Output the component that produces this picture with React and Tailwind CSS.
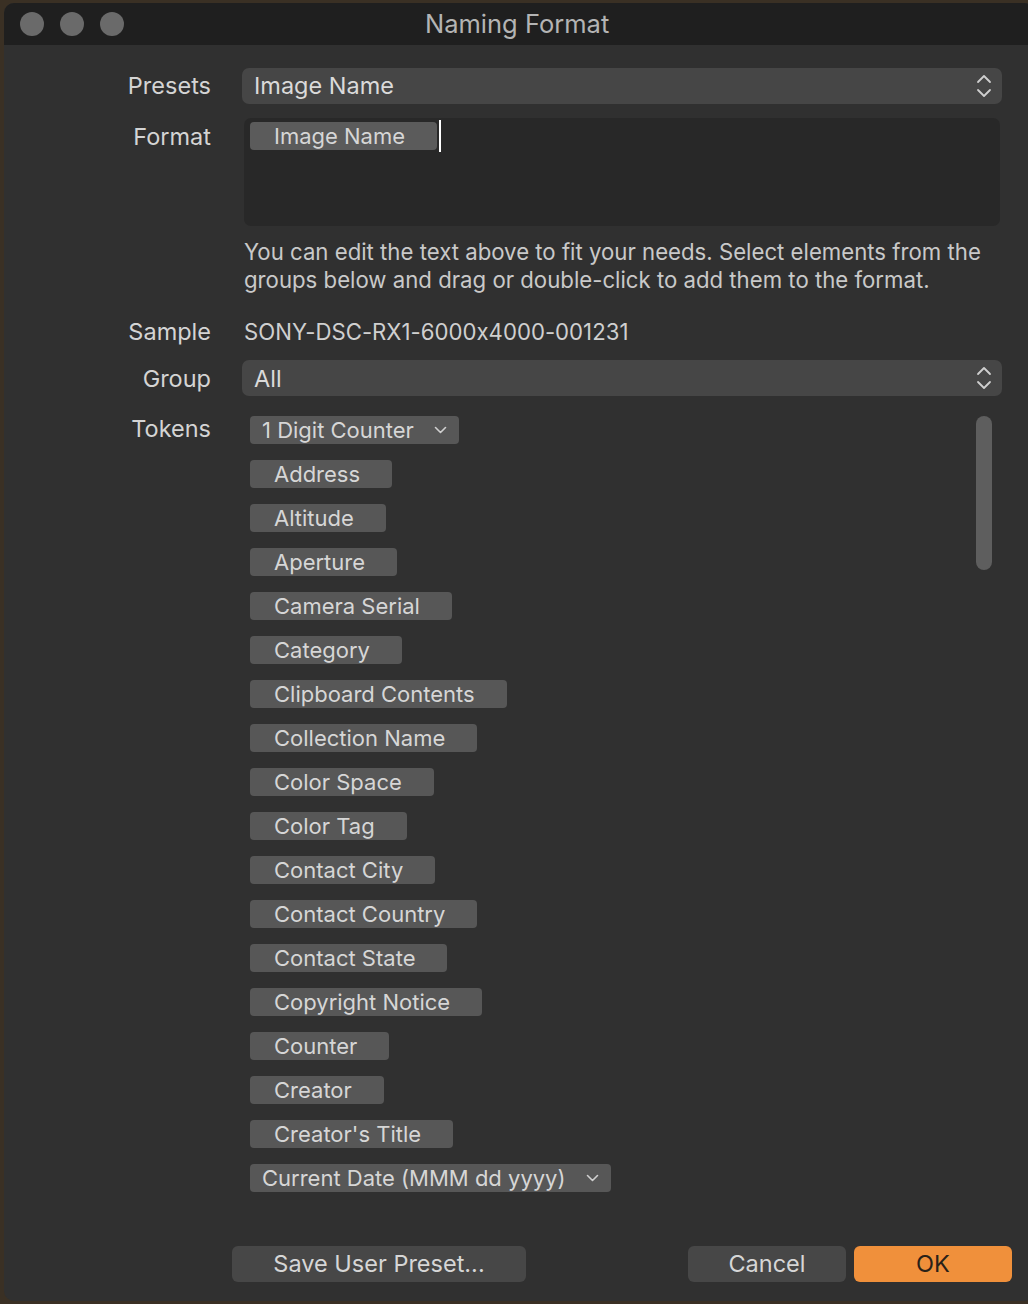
import React from "react";

const tokens = [
  { t: "1 Digit Counter", dd: true },
  { t: "Address" },
  { t: "Altitude" },
  { t: "Aperture" },
  { t: "Camera Serial" },
  { t: "Category" },
  { t: "Clipboard Contents" },
  { t: "Collection Name" },
  { t: "Color Space" },
  { t: "Color Tag" },
  { t: "Contact City" },
  { t: "Contact Country" },
  { t: "Contact State" },
  { t: "Copyright Notice" },
  { t: "Counter" },
  { t: "Creator" },
  { t: "Creator's Title" },
  { t: "Current Date (MMM dd yyyy)", dd: true },
];

function UpDown() {
  return (
    <svg width="16" height="26" viewBox="0 0 16 26" fill="none" stroke="#cfcfcf" strokeWidth="1.8" strokeLinecap="round" strokeLinejoin="round">
      <path d="M2 9 L8 3 L14 9" />
      <path d="M2 17 L8 23 L14 17" />
    </svg>
  );
}

function Chevron() {
  return (
    <svg width="13" height="8" viewBox="0 0 13 8" fill="none" stroke="#d0d0d0" strokeWidth="1.6" strokeLinecap="round" strokeLinejoin="round">
      <path d="M1.5 1.5 L6.5 6.5 L11.5 1.5" />
    </svg>
  );
}

function Select({ value }) {
  return (
    <div className="h-[36px] w-[760px] rounded-[7px] bg-[#464646] flex items-center justify-between pl-[12px] pr-[10px] text-[23.5px] text-[#dadada]">
      <span>{value}</span>
      <UpDown />
    </div>
  );
}

const label = "w-[207px] text-right text-[23.5px] text-[#d4d4d4]";

export default function App() {
  return (
    <div className="w-[1028px] h-[1304px] bg-[#3a3024] overflow-hidden relative font-['Inter','Liberation_Sans',sans-serif] [font-feature-settings:'calt'_0]">
      <div className="ml-[4px] mt-[3px] w-[1030px] h-[1298px] rounded-[10px] bg-[#303030] overflow-hidden flex flex-col">
        {/* title bar */}
        <div className="h-[42px] bg-[#1f1f1f] relative flex items-center shrink-0">
          <div className="flex gap-[16px] pl-[16px]">
            <div className="w-[24px] h-[24px] rounded-full bg-[#6a6a6a]" />
            <div className="w-[24px] h-[24px] rounded-full bg-[#6a6a6a]" />
            <div className="w-[24px] h-[24px] rounded-full bg-[#6a6a6a]" />
          </div>
          <div className="absolute left-[421px] top-0 h-[42px] flex items-center text-[25.5px] text-[#b4b4b4]">Naming Format</div>
        </div>

        {/* body */}
        <div className="flex flex-col pt-[23px]">
          {/* Presets */}
          <div className="flex items-center">
            <div className={label}>Presets</div>
            <div className="ml-[31px]"><Select value="Image Name" /></div>
          </div>

          {/* Format */}
          <div className="flex mt-[14px]">
            <div className={label + " pt-[1px]"}>Format</div>
            <div className="ml-[33px] w-[756px] h-[108px] rounded-[7px] bg-[#282828] pl-[6px] pt-[4px]">
              <div className="flex items-start">
                <div className="h-[28px] w-[187px] rounded-[4px] bg-[#5b5b5b] pl-[24px] flex items-center text-[22px] text-[#d6d6d6]">Image Name</div>
                <div className="ml-[2px] -mt-[2px] w-[2px] h-[32px] bg-white" />
              </div>
            </div>
          </div>

          {/* help */}
          <div className="flex mt-[12px]">
            <div className="w-[207px]" />
            <div className="ml-[33px] w-[760px] text-[22.2px] leading-[28px] text-[#c9c9c9]">
              You can edit the text above to fit your needs. Select elements from the groups below and drag or double-click to add them to the format.
            </div>
          </div>

          {/* Sample */}
          <div className="flex items-center mt-[20px]">
            <div className={label}>Sample</div>
            <div className="ml-[33px] text-[22.2px] text-[#cfcfcf]">SONY-DSC-RX1-6000x4000-001231</div>
          </div>

          {/* Group */}
          <div className="flex items-center mt-[11px]">
            <div className={label}>Group</div>
            <div className="ml-[31px]"><Select value="All" /></div>
          </div>

          {/* Tokens */}
          <div className="flex mt-[20px]">
            <div className={label + " -mt-[5px]"}>Tokens</div>
            <div className="ml-[39px] w-[746px] h-[800px] relative">
              <div className="flex flex-col items-start gap-[16px]">
                {tokens.map((k) =>
                  k.dd ? (
                    <div key={k.t} className="h-[28px] rounded-[4px] bg-[#575757] pl-[12px] pr-[12px] flex items-center gap-[20px] text-[22px] text-[#d6d6d6]">
                      <span>{k.t}</span>
                      <Chevron />
                    </div>
                  ) : (
                    <div key={k.t} className="h-[28px] rounded-[4px] bg-[#575757] pl-[24px] pr-[32px] flex items-center text-[22px] text-[#d6d6d6]">
                      {k.t}
                    </div>
                  )
                )}
              </div>
              <div className="absolute left-[726px] top-0 w-[16px] h-[154px] rounded-full bg-[#5e5e5e]" />
            </div>
          </div>
        </div>
      </div>

      {/* buttons */}
      <div className="absolute left-[232px] top-[1246px] flex">
        <div className="w-[294px] h-[36px] rounded-[6px] bg-[#474747] flex items-center justify-center text-[23.5px] text-[#d6d6d6]">Save User Preset...</div>
        <div className="ml-[162px] w-[158px] h-[36px] rounded-[6px] bg-[#474747] flex items-center justify-center text-[23.5px] text-[#d6d6d6]">Cancel</div>
        <div className="ml-[8px] w-[158px] h-[36px] rounded-[6px] bg-[#f0903b] flex items-center justify-center text-[23.5px] text-[#2a2118]">OK</div>
      </div>
    </div>
  );
}
